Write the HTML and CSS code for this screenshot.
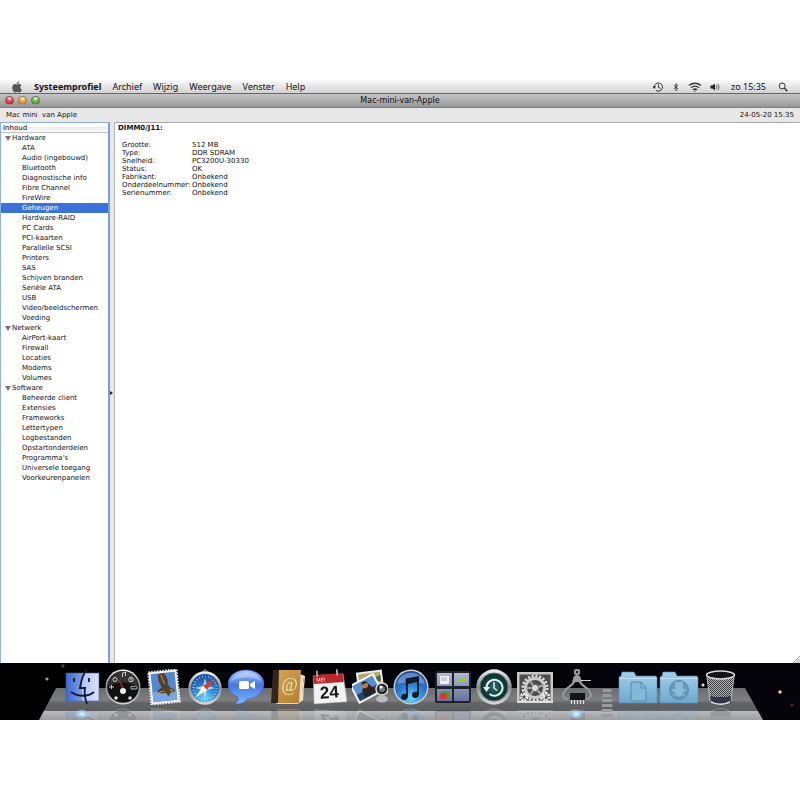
FILE: index.html
```html
<!DOCTYPE html>
<html lang="nl">
<head>
<meta charset="utf-8">
<title>Mac-mini-van-Apple</title>
<link rel="stylesheet" href="styles.css">
</head>
<body>
<div class="screen">
  <header class="menubar">
    <nav class="menus">
      <button class="apple" aria-label="Apple"><svg viewBox="0 0 12 12" width="12" height="12"><path fill="#555" d="M8.2.4C8.200 1.800 7.200 2.900 5.900 2.900 5.800 1.600 7 .5 8.200.4zM6 3.500c.6 0 1.300-.6 2.400-.6.900 0 1.700.4 2.200 1.100-1.900 1.100-1.600 3.800.4 4.500-.6 1.500-1.500 2.900-2.500 2.900-.8 0-1.100-.5-2.200-.5s-1.400.5-2.100.5C2.700 11.400 1.200 8.700 1.200 6.500c0-2.200 1.300-3.500 2.800-3.500.9 0 1.500.5 2 .5z"/></svg></button>
      <button class="app-name">Systeemprofiel</button>
      <button>Archief</button>
      <button>Wijzig</button>
      <button>Weergave</button>
      <button>Venster</button>
      <button>Help</button>
    </nav>
    <div class="status">
      <button aria-label="Time Machine"><svg viewBox="0 0 12 12" width="12" height="12" fill="none" stroke="#333"><path d="M2.300 6.500A4.100 4.100 0 1 1 4 9.400M6.400 3.300v3l2 1"/><path d="M.4 5.300h3.800L2.300 8z" fill="#333" stroke="none"/></svg></button>
      <button aria-label="Bluetooth"><svg viewBox="0 0 8 12" width="8" height="12" fill="none" stroke="#444"><path d="M1.800 4.200l4 3.400L4 9.500v-7l1.800 2-4 3.400"/></svg></button>
      <button aria-label="AirPort"><svg viewBox="0 0 14 12" width="14" height="12" fill="none" stroke="#333" stroke-width="1.300"><path d="M1 4.500c3.400-3 8.600-3 12 0M3 6.800c2.400-2 5.600-2 8 0M5 8.800c1.200-1 2.800-1 4 0"/><circle cx="7" cy="10" r=".7" fill="#333" stroke="none"/></svg></button>
      <button aria-label="Volume"><svg viewBox="0 0 10 12" width="10" height="12" fill="none" stroke="#555"><path d="M.5 4.500h2L5 2.500v7L2.500 7.500h-2z" fill="#222" stroke="none"/><path d="M6.200 4.200c.9 1 .9 2.600 0 3.600M7.700 2.900c1.700 1.800 1.700 4.400 0 6.200"/></svg></button>
      <button class="clock">zo 15:35</button>
      <button aria-label="Spotlight"><svg viewBox="0 0 12 12" width="12" height="12" fill="none" stroke="#333"><circle cx="5.200" cy="5" r="3"/><path d="M7.500 7.300l2.800 3" stroke-width="1.500"/></svg></button>
    </div>
  </header>

  <main class="window">
    <div class="titlebar">
      <div class="lights">
        <button class="light red" aria-label="Sluit"></button>
        <button class="light amber" aria-label="Minimaliseer"></button>
        <button class="light green" aria-label="Vergroot"></button>
      </div>
      <h1>Mac-mini-van-Apple</h1>
    </div>
    <div class="infobar"><span>Mac mini&nbsp; van Apple</span><time>24-05-20 15:35</time></div>
    <div class="panes">
      <aside class="sidebar">
        <div class="column-head">Inhoud</div>
        <button class="group">Hardware</button>
        <ul>
          <li><button>ATA</button></li>
          <li><button>Audio (ingebouwd)</button></li>
          <li><button>Bluetooth</button></li>
          <li><button>Diagnostische info</button></li>
          <li><button>Fibre Channel</button></li>
          <li><button>FireWire</button></li>
          <li><button class="selected">Geheugen</button></li>
          <li><button>Hardware-RAID</button></li>
          <li><button>PC Cards</button></li>
          <li><button>PCI-kaarten</button></li>
          <li><button>Parallelle SCSI</button></li>
          <li><button>Printers</button></li>
          <li><button>SAS</button></li>
          <li><button>Schijven branden</button></li>
          <li><button>Seriële ATA</button></li>
          <li><button>USB</button></li>
          <li><button>Video/beeldschermen</button></li>
          <li><button>Voeding</button></li>
        </ul>
        <button class="group">Netwerk</button>
        <ul>
          <li><button>AirPort-kaart</button></li>
          <li><button>Firewall</button></li>
          <li><button>Locaties</button></li>
          <li><button>Modems</button></li>
          <li><button>Volumes</button></li>
        </ul>
        <button class="group">Software</button>
        <ul>
          <li><button>Beheerde client</button></li>
          <li><button>Extensies</button></li>
          <li><button>Frameworks</button></li>
          <li><button>Lettertypen</button></li>
          <li><button>Logbestanden</button></li>
          <li><button>Opstartonderdelen</button></li>
          <li><button>Programma's</button></li>
          <li><button>Universele toegang</button></li>
          <li><button>Voorkeurenpanelen</button></li>
        </ul>
      </aside>
      <div class="splitter"></div>
      <section class="detail">
        <h2>DIMM0/J11:</h2>
        <table>
          <tr><th scope="row">Grootte:</th><td>512 MB</td></tr>
          <tr><th scope="row">Type:</th><td>DDR SDRAM</td></tr>
          <tr><th scope="row">Snelheid:</th><td>PC3200U-30330</td></tr>
          <tr><th scope="row">Status:</th><td>OK</td></tr>
          <tr><th scope="row">Fabrikant:</th><td>Onbekend</td></tr>
          <tr><th scope="row">Onderdeelnummer:</th><td>Onbekend</td></tr>
          <tr><th scope="row">Serienummer:</th><td>Onbekend</td></tr>
        </table>
        <svg class="grip" viewBox="0 0 8 8" width="8" height="8" stroke="#888" stroke-width=".8"><path d="M1 8l7-7M3.500 8L8 3.500M6 8l2-2"/></svg>
      </section>
    </div>
  </main>

  <footer class="dock">
    <div class="slab"></div>
    <svg width="0" height="0" class="defs">
      <defs>
        <linearGradient id="chrome" x2="0" y2="1"><stop stop-color="#f2f2f2"/><stop offset=".5" stop-color="#8c8e90"/><stop offset="1" stop-color="#d8d8d8"/></linearGradient>
        <linearGradient id="finder" x2="1" y2="0"><stop stop-color="#3c68cf"/><stop offset=".5" stop-color="#7e9ee8"/><stop offset=".5" stop-color="#b4c4f2"/><stop offset="1" stop-color="#d9e2fa"/></linearGradient>
        <radialGradient id="aqua" cx=".5" cy=".85" r=".8"><stop stop-color="#6fd2fb"/><stop offset=".5" stop-color="#2c84d8"/><stop offset="1" stop-color="#194c9c"/></radialGradient>
        <linearGradient id="bubble" x2="0" y2="1"><stop stop-color="#a5c4fa"/><stop offset=".45" stop-color="#4577e2"/><stop offset="1" stop-color="#80b8fa"/></linearGradient>
        <linearGradient id="folder" x2="0" y2="1"><stop stop-color="#a4d0ea"/><stop offset="1" stop-color="#6ca8ce"/></linearGradient>
        <linearGradient id="tile" x2="0" y2="1"><stop stop-color="#b2b9d0"/><stop offset="1" stop-color="#6473a0"/></linearGradient>
        <linearGradient id="leather" x2="1" y2="1"><stop stop-color="#d6a75a"/><stop offset="1" stop-color="#b67d2b"/></linearGradient>
        <radialGradient id="teal"><stop stop-color="#2c6965"/><stop offset="1" stop-color="#092b2d"/></radialGradient>
        <pattern id="mesh" width="2" height="2" patternUnits="userSpaceOnUse"><path d="M0 0h1v1H0zM1 1h1v1H1z" fill="#bbb"/></pattern>
      </defs>
    </svg>
    <nav class="icons">
      <button class="running" aria-label="Finder"><svg viewBox="0 0 36 36">
        <path d="M2 4h33v28H2z" fill="url(#finder)" stroke="#405a9c" stroke-width=".6"/>
        <path d="M23 0c-4 5-6 12-7 19h5c-1 6 0 11 2 16" fill="none" stroke="#111a33" stroke-width="1.800"/>
        <path d="M10 9v4M25 9v4" stroke="#111a33" stroke-width="1.800"/><path d="M7 23c7 5 17 5 23 0" fill="none" stroke="#111a33" stroke-width="1.800"/></svg></button>
      <button aria-label="Dashboard"><svg viewBox="0 0 36 36">
        <circle cx="18" cy="18" r="17.500" fill="url(#chrome)"/><circle cx="18" cy="18" r="15.800" fill="#111"/><path d="M3 17a15 15 0 0 1 30 0q-15-7-30 0z" fill="#333"/>
        <g fill="none" stroke="#ccc"><circle cx="10" cy="10.500" r="2"/><circle cx="26" cy="10.500" r="2.300"/><path d="M26 9v2h1M17.500 8V4l3-1v4M4 18h5M6.500 16v4M26.500 20c-2-2 1-4 2-2 2-2 5 0 3 2z"/></g>
        <path d="M14 11l4 10 1-1z" fill="#d22" stroke="#d22" stroke-width=".5"/><circle cx="18" cy="22" r="3" fill="#eee"/><circle cx="11" cy="29" r="1.800" fill="#ddd"/><circle cx="25" cy="29" r="1.800" fill="#ddd"/></svg></button>
      <button aria-label="Mail"><svg viewBox="0 0 36 36">
        <g transform="rotate(-6 18 18)"><path d="M4 2h28v32H4z" fill="#f4f4f4" stroke="#eee" stroke-width="2.500" stroke-dasharray="1.600 1.200"/><path d="M6 4h24v28H6z" fill="#5288d2"/><path d="M6 23q9-6 24 0v9H6z" fill="#79a6e2"/>
        <path d="M13 5l6-1c3 3 4 7 3 12l3 4c3 1 4 2 3 4-3-1-5 1-6 4l-3-4c-4 1-7-1-9-2l6-4c-3-4-3-8-3-13z" fill="#54412a"/><path d="M16 6l3 9M12 23l6-1" stroke="#b39459"/><path d="M23 21l4 1-2 1z" fill="#e2c13d"/></g></svg></button>
      <button aria-label="Safari"><svg viewBox="0 0 36 36">
        <circle cx="18" cy="2.500" r="1.800" fill="none" stroke="#999"/><circle cx="18" cy="19" r="16.700" fill="url(#chrome)"/><circle cx="18" cy="19" r="14" fill="url(#aqua)"/>
        <circle cx="18" cy="19" r="11.500" fill="none" stroke="#bfe4fb" stroke-width="2" stroke-dasharray=".7 2.300"/><path d="M18 9l2 8 8 2-8 2-2 8-2-8-8-2 8-2z" fill="#b8d8ef"/>
        <path d="M28 9L20 21l-4-4z" fill="#e33a28"/><path d="M8 29l8-12 4 4z" fill="#f5f5f5"/></svg></button>
      <button aria-label="iChat"><svg viewBox="0 0 36 36">
        <path d="M18 1c10 0 18 6 18 14s-8 15-17 15c-2 4-6 5-12 5 2-2 4-4 3-7C4 26 0 21 0 15 0 7 8 1 18 1z" fill="url(#bubble)" stroke="#3864bd" stroke-width=".6"/>
        <path d="M3 12C7 1 29 0 33 12c-10-5-20-4-30 0z" fill="#fff" opacity=".3"/><rect x="11" y="12" width="10" height="8" rx="1.500" fill="#fff"/><path d="M22 15l5-3v8l-5-3z" fill="#fff"/></svg></button>
      <button aria-label="Adresboek"><svg viewBox="0 0 36 36">
        <path d="M30 5l5 2-2 24-5 4H6z" fill="#e7dfc8"/><path d="M8 1h23l-2 33H3z" fill="url(#leather)"/><path d="M3 1h6l-1 33H1z" fill="#34251c"/><path d="M33 9l1 5M32.500 18l1 5" stroke="#aaa"/>
        <text x="19.500" y="22" text-anchor="middle" class="at">@</text></svg></button>
      <button aria-label="iCal"><svg viewBox="0 0 36 36">
        <g transform="rotate(-4 18 18)"><path d="M3 6h30l2 28H2z" fill="#f2f2f2" stroke="#aaa" stroke-width=".5"/><path d="M3 5h30v9H3z" fill="#b8282b"/><path d="M7 1v6M27 1v6" stroke="#ccc" stroke-width="1.500"/>
        <text x="6" y="12" class="month">MEI</text><text x="18" y="29" text-anchor="middle" class="day">24</text></g></svg></button>
      <button aria-label="iPhoto"><svg viewBox="0 0 36 36">
        <g transform="rotate(-7 18 12)"><path d="M5 2h26v23H5z" fill="#eee"/><path d="M7 4h22v19H7z" fill="#b3aa69"/><path d="M8 10l8-4 5 4 8-3v6H8z" fill="#52683e"/></g>
        <g transform="rotate(-28 14 20)"><path d="M1 9h27v21H1z" fill="#fafafa"/><path d="M3 11h23v17H3z" fill="#5790cd"/><path d="M3 21h23v7H3z" fill="#234473"/><path d="M10 19l8-4 5 12H9z" fill="#2c2020"/><circle cx="15" cy="16" r="3.200" fill="#b57a50"/><path d="M12 14q3-4 7 1z" fill="#221b1a"/></g>
        <path d="M25 20h11v10q-5 4-10 0z" fill="#777"/><ellipse cx="30" cy="30" rx="6" ry="3.500" fill="#bbb"/><circle cx="30" cy="20" r="6" fill="#242424" stroke="#ddd" stroke-width="1.500"/><circle cx="30" cy="20" r="3" fill="#6e7c7a"/><circle cx="29" cy="18" r="1.500" fill="#fff"/></svg></button>
      <button aria-label="iTunes"><svg viewBox="0 0 36 36">
        <circle cx="18" cy="18" r="17.500" fill="#c7ccd3"/><circle cx="18" cy="18" r="16" fill="url(#aqua)"/><path d="M4 15C7 0 29 0 32 15q-14-4-28 0z" fill="#fff" opacity=".3"/>
        <path d="M12.500 9.500L26 7v18c0 5-7 5-7 1 0-3 3-4 5-3v-10l-9 2v12c0 5-7 5-7 1 0-3 3-4 5-3z" fill="#101b2b"/></svg></button>
      <button aria-label="Spaces"><svg viewBox="0 0 36 36">
        <rect y="2" width="36" height="32" rx="2" fill="#20232d"/><path d="M2 4h15v13H2zM19 4h15v13H19zM2 20h15v12H2zM19 20h15v12H19z" fill="url(#tile)"/>
        <path d="M5 7h9v8H5z" fill="#f0f3f5"/><path d="M6 9h6M6 11h6" stroke="#aaa"/><path d="M22 11l4-1 5-3v5l-9 2z" fill="#92cf35"/><path d="M6 22h9v7l-3 1v-4H6z" fill="#43a538"/><path d="M5 24h7v6H5z" fill="#d43c2d"/></svg></button>
      <button aria-label="Time Machine"><svg viewBox="0 0 36 36">
        <circle cx="18" cy="18" r="17.700" fill="url(#chrome)"/><circle cx="18" cy="18" r="14" fill="url(#teal)" stroke="#687777"/>
        <path d="M10.500 19a8 8 0 1 1 3 6" fill="none" stroke="#d6f4eb" stroke-width="2"/><path d="M7 18h7l-3.500 5z" fill="#d6f4eb"/><path d="M18 13v6l3 2.500" fill="none" stroke="#d6f4eb" stroke-width="1.500"/></svg></button>
      <button aria-label="Systeemvoorkeuren"><svg viewBox="0 0 36 36">
        <path d="M0 3h36v31H0z" fill="#c9c9c9"/><path d="M2.500 5.500h31v26h-31z" fill="#4c4c4c"/>
        <circle cx="18" cy="19" r="12" fill="none" stroke="#ddd" stroke-width="3" stroke-dasharray="2.200 1.570"/><circle cx="18" cy="19" r="9.500" fill="none" stroke="#ccc" stroke-width="3"/>
        <path d="M18 19l-5-7M18 19l9-3M18 19l-5 7M18 19l6 6M18 19H9" stroke="#aaa" stroke-width="2"/><circle cx="18" cy="19" r="3.500" fill="#ddd" stroke="#777"/>
        <circle cx="7" cy="28" r="3" fill="none" stroke="#eee" stroke-width="3" stroke-dasharray="1.800 .8"/><circle cx="29" cy="28" r="3" fill="none" stroke="#eee" stroke-width="3" stroke-dasharray="1.800 .8"/><path d="M0 32h36v2H0z" fill="#ddd"/></svg></button>
      <button class="running" aria-label="Systeemprofiel"><svg viewBox="0 0 36 36">
        <g fill="none" stroke="#92959a" stroke-width="2.200"><circle cx="19" cy="3" r="2.200"/><path d="M19 5v4" stroke-width="3"/><path d="M17 11c-1 6-11 7-12 15 0 2 2 4 5 4M21 11c1 6 11 7 12 15 0 2-2 4-5 4"/></g>
        <path d="M16 7h6l2 6H14z" fill="#9b9da1"/><path d="M23 11.500h10" stroke="#ccc"/><path d="M12 24h15v7H12z" fill="#151515"/><path d="M13.500 31v4M16.500 31v4M19.500 31v4M22.500 31v4M25.500 31v4" stroke="#ddd" stroke-width="1.300"/></svg></button>
      <div class="divider"></div>
      <button aria-label="Documenten"><svg class="wide" viewBox="0 0 40 36">
        <path d="M1 34V8l2-1 1-4h12l2 4h20l1 2v25z" fill="url(#folder)" stroke="#5689ab" stroke-width=".6"/><path d="M1 9.500h38" stroke="#c4e1f1"/><path d="M13 13h10l5 6v13H13zM23 13v6h5" fill="#85b7d6" stroke="#568bab"/></svg></button>
      <button aria-label="Downloads"><svg class="wide" viewBox="0 0 40 36">
        <path d="M1 34V8l2-1 1-4h12l2 4h20l1 2v25z" fill="url(#folder)" stroke="#5689ab" stroke-width=".6"/><path d="M1 9.500h38" stroke="#c4e1f1"/><circle cx="20" cy="21" r="9.500" fill="#6699b8" stroke="#568bab"/><path d="M16 13h8v7h4l-8 8-8-8h4z" fill="#8abbd8"/><path d="M14 26h12" stroke="#8abbd8"/></svg></button>
      <button aria-label="Prullenmand"><svg viewBox="0 0 36 36">
        <path d="M5 5h27l-3 29q-10 5-20 0z" fill="#35363a"/><path d="M5 8h27l-3 20H8z" fill="url(#mesh)"/><path d="M9 27q10 4 19 0l-1 5q-8 4-17 0z" fill="#34334d"/><path d="M9 32q9 5 19 0v2q-9 4-19 0z" fill="#ddd"/><ellipse cx="18.500" cy="6" rx="14" ry="4" fill="#151518" stroke="#d9d9dd" stroke-width="1.500"/><path d="M5 8l3 24M32 8l-3 24" stroke="#bbb"/></svg></button>
    </nav>
  </footer>
</div>
</body>
</html>
```
FILE: styles.css
```css
* { box-sizing: border-box; }
body {
  margin: 0;
  background: #fff;
  color: #111;
  font: 7px/10px "DejaVu Sans", sans-serif;
}
button {
  display: block;
  margin: 0;
  padding: 0;
  border: 0;
  background: none;
  color: inherit;
  font: inherit;
  text-align: left;
  white-space: nowrap;
}
svg { display: block; }
.screen {
  display: flex;
  flex-direction: column;
  height: 80vh;
  min-height: 560px;
  margin-top: 10vh;
}

.menubar {
  display: flex;
  justify-content: space-between;
  height: 14px;
  padding: 0 11px;
  border-bottom: 1px solid #666;
  background: linear-gradient(#fafafa, #d2d2d2);
  font: 9px/13px "Noto Sans", sans-serif;
}
.menus, .status { display: flex; align-items: center; }
.menus { gap: 11px; }
.status { gap: 8px; }
.app-name { font-weight: 700; }
.clock { margin: 0 3px; }

.window {
  display: flex;
  flex: 1;
  flex-direction: column;
  min-height: 0;
  background: #e8e8e8;
}
.titlebar {
  display: grid;
  grid-template-columns: 1fr auto 1fr;
  align-items: center;
  height: 14px;
  padding: 0 5px;
  border-bottom: 1px solid #7d7d7d;
  background: linear-gradient(#c6c6c6, #979797);
}
h1 { margin: 0; font-size: 8px; font-weight: 400; }
.lights { display: flex; gap: 4px; }
.light { width: 9px; height: 9px; border: 1px solid #6668; border-radius: 50%; }
.red { background: radial-gradient(circle at 50% 20%, #fff, #ec4a4a 40%, #b91d25); }
.amber { background: radial-gradient(circle at 50% 20%, #fff, #f0ac42 40%, #c87d16); }
.green { background: radial-gradient(circle at 50% 20%, #fff, #79bb4b 40%, #3f8a23); }
.infobar {
  display: flex;
  justify-content: space-between;
  padding: 2px 6px;
}

.panes { display: flex; flex: 1; min-height: 0; }
.sidebar {
  width: 110px;
  border: 1px solid #8fb0d8;
  border-right: 2px solid #79a2d3;
  border-bottom: 0;
  background: #fff;
}
.column-head {
  height: 10px;
  padding-left: 2px;
  border-bottom: 1px solid #c4c4c4;
  background: linear-gradient(#fff 40%, #ececec 50%, #fafafa);
}
ul { margin: 0; padding: 0; list-style: none; }
.sidebar button { width: 100%; height: 10px; padding-left: 21px; }
.sidebar .group { display: flex; align-items: center; gap: 1px; padding-left: 4px; }
.group::before {
  content: "";
  border: 3px solid transparent;
  border-top: 5px solid #777;
  border-bottom: 0;
}
.sidebar .selected { background: #3a72d8; color: #fff; }
.splitter {
  display: flex;
  align-items: center;
  width: 5px;
  border-right: 1px solid #b5b5b5;
}
.splitter::before {
  content: "";
  border: 2px solid transparent;
  border-left: 3px solid #222;
  border-right: 0;
}
.detail {
  position: relative;
  flex: 1;
  padding: 0 3px;
  border-top: 1px solid #a5a5a5;
  background: #fff;
}
h2 { margin: 0 0 8px; font-size: 7px; line-height: 10px; }
table { margin-left: 4px; border-collapse: collapse; line-height: 8px; }
th, td { padding: 0; font-weight: 400; text-align: left; }
th { width: 70px; white-space: nowrap; }
.grip { position: absolute; right: 0; bottom: 0; }

.dock {
  position: relative;
  height: 57px;
  overflow: hidden;
  background:
    radial-gradient(circle at 47px 16px, #99a 0 1px, transparent 2px),
    radial-gradient(circle at 63px 3px, #445 0 1px, transparent 2px),
    radial-gradient(circle at 703px 22px, #ddd 0 1px, transparent 2px),
    radial-gradient(circle at 780px 29px, #fcc 0 1px, #7238 2px, transparent 3px),
    radial-gradient(circle at 792px 42px, #522 0 1px, transparent 2px),
    linear-gradient(90deg, #000, #03040a 50%, #05040a);
}
.slab {
  position: absolute;
  inset: 25px 37px 0 39px;
  clip-path: polygon(17px 0, calc(100% - 18px) 0, 100% 100%, 0 100%);
  background: linear-gradient(#6a6b6d 0, #7e7f81 12px, #636466 15px, #5c5d5f 23px, #b9bbbe 23px, #9c9ea1 32px);
}
.defs { position: absolute; }
.icons {
  position: relative;
  display: grid;
  grid-template-columns: repeat(13, minmax(0, 2fr)) minmax(0, 1fr) repeat(3, minmax(0, 2fr));
  align-items: start;
  padding: 6px 59px 0 61px;
}
.icons button { position: relative; display: grid; justify-items: center; }
.icons svg {
  width: 36px;
  height: 36px;
  -webkit-box-reflect: below 3px linear-gradient(transparent 50%, #0004);
}
.icons .wide { width: 40px; }
.running::after {
  content: "";
  position: absolute;
  left: 50%;
  bottom: -14px;
  width: 16px;
  height: 10px;
  margin-left: -8px;
  background: radial-gradient(closest-side, #fff, #a4d8ff 40%, transparent);
}
.divider {
  justify-self: center;
  width: 12px;
  height: 28px;
  margin-top: 20px;
  background: repeating-linear-gradient(#999b9e 0 3px, transparent 3px 5px);
  clip-path: polygon(15% 0, 85% 0, 100% 100%, 0 100%);
}
.at { fill: #efdfb9; font: 18px "Liberation Serif", serif; }
.month { fill: #fff; font: 5px "Liberation Sans", sans-serif; }
.day { fill: #161616; font: bold 17px "Liberation Sans", sans-serif; }
```
